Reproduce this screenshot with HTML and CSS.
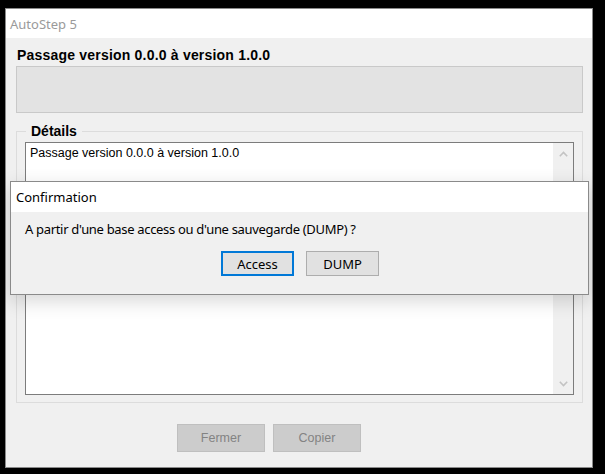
FILE: index.html
```html
<!DOCTYPE html>
<html lang="fr">
<head>
<meta charset="utf-8">
<title>AutoStep 5</title>
<link rel="stylesheet" href="styles.css">
</head>
<body>
<div class="window">
  <div class="titlebar">AutoStep 5</div>
  <div class="client">
    <h1 class="heading">Passage version 0.0.0 à version 1.0.0</h1>
    <div class="statusbox"></div>
    <div class="group">
      <div class="group-label">Détails</div>
      <div class="log">
        <div class="log-text">Passage version 0.0.0 à version 1.0.0</div>
        <div class="scrollbar">
          <div class="sb-btn sb-up"><svg width="9" height="6" viewBox="0 0 9 6"><polyline points="0.8,5.2 4.5,1.5 8.2,5.2" fill="none" stroke="#c3c3c3" stroke-width="1.6"/></svg></div>
          <div class="sb-btn sb-down"><svg width="9" height="6" viewBox="0 0 9 6"><polyline points="0.8,0.8 4.5,4.5 8.2,0.8" fill="none" stroke="#c3c3c3" stroke-width="1.6"/></svg></div>
        </div>
      </div>
    </div>
    <div class="actions">
      <button class="btn btn-disabled" disabled>Fermer</button>
      <button class="btn btn-disabled" disabled>Copier</button>
    </div>
  </div>

  <div class="dialog">
    <div class="dlg-title">Confirmation</div>
    <div class="dlg-body">
      <div class="dlg-text">A partir d'une base access ou d'une sauvegarde (DUMP) ?</div>
      <div class="dlg-buttons">
        <button class="dbtn dbtn-default">Access</button>
        <button class="dbtn">DUMP</button>
      </div>
    </div>
  </div>
</div>
</body>
</html>
```

FILE: styles.css
```css
html, body {
  margin: 0;
  background: #000;
}
body {
  width: 605px;
  height: 474px;
  box-sizing: border-box;
  padding: 8px 0 0 5px;
  overflow: hidden;
}
.window {
  position: relative;
  width: 588px;
  height: 460px;
  box-sizing: border-box;
  border: 1px solid #8a8a8a;
  background: #f0f0f0;
  display: flex;
  flex-direction: column;
}
.titlebar {
  height: 29px;
  flex: none;
  background: #fff;
  color: #9a9a9a;
  font: 13px/18px "Noto Sans", sans-serif;
  padding-left: 4px;
  display: flex;
  align-items: center;
}
.client {
  flex: 1;
  padding: 9px 9px 0 10px;
  display: flex;
  flex-direction: column;
}
.heading {
  margin: 0 0 3px 1px;
  font: bold 14px/16px "Liberation Sans", Arial, sans-serif;
  letter-spacing: 0.2px;
  color: #000;
}
.statusbox {
  height: 47px;
  box-sizing: border-box;
  border: 1px solid #c9c9c9;
  background: #e3e3e3;
}
.group {
  margin-top: 18px;
  border: 1px solid #dcdcdc;
  padding: 0 8px 7px 8px;
  display: flex;
  flex-direction: column;
}
.group-label {
  align-self: flex-start;
  margin: -9px 0 3px 1px;
  padding: 0 5px;
  background: #f0f0f0;
  font: bold 14px/16px "Liberation Sans", Arial, sans-serif;
  color: #000;
}
.log {
  height: 253px;
  box-sizing: border-box;
  border: 1px solid #7c7c7c;
  background: #fff;
  display: flex;
}
.log-text {
  flex: 1;
  padding: 3px 4px;
  font: 12.5px/15px "Liberation Sans", Arial, sans-serif;
  color: #000;
}
.scrollbar {
  width: 20px;
  background: #f0f0f0;
  display: flex;
  flex-direction: column;
  justify-content: space-between;
}
.sb-btn {
  height: 21px;
  display: flex;
  align-items: center;
  justify-content: center;
}
.sb-btn svg { display: block; }
.actions {
  display: flex;
  gap: 8px;
  margin-top: 21px;
  padding-left: 161px;
}
.btn {
  width: 88px;
  height: 28px;
  box-sizing: border-box;
  margin: 0;
  padding: 0;
  font: 12.5px "Liberation Sans", Arial, sans-serif;
}
.btn-disabled {
  background: #cccccc;
  border: 1px solid #bfbfbf;
  color: #838383;
}

/* Overlaid message box */
.dialog {
  position: absolute;
  left: 4px;
  top: 172px;
  width: 579px;
  height: 114px;
  box-sizing: border-box;
  border: 1px solid #8a8a8a;
  background: #f0f0f0;
  box-shadow: 0 6px 18px rgba(0, 0, 0, 0.16);
  display: flex;
  flex-direction: column;
}
.dlg-title {
  height: 30px;
  flex: none;
  background: #fff;
  padding-left: 5px;
  display: flex;
  align-items: center;
  font: 13px/18px "Noto Sans", sans-serif;
  color: #000;
}
.dlg-body {
  padding: 8px 0 0 14px;
}
.dlg-text {
  font: 13px/18px "Noto Sans", sans-serif;
  letter-spacing: -0.32px;
  color: #000;
}
.dlg-buttons {
  display: flex;
  gap: 12px;
  margin-top: 13px;
  padding-left: 196px;
}
.dbtn {
  width: 73px;
  height: 25px;
  box-sizing: border-box;
  margin: 0;
  padding: 0;
  background: #e1e1e1;
  border: 1px solid #adadad;
  font: 13px "Noto Sans", sans-serif;
  color: #000;
}
.dbtn-default {
  border: 2px solid #0078d7;
}
```
